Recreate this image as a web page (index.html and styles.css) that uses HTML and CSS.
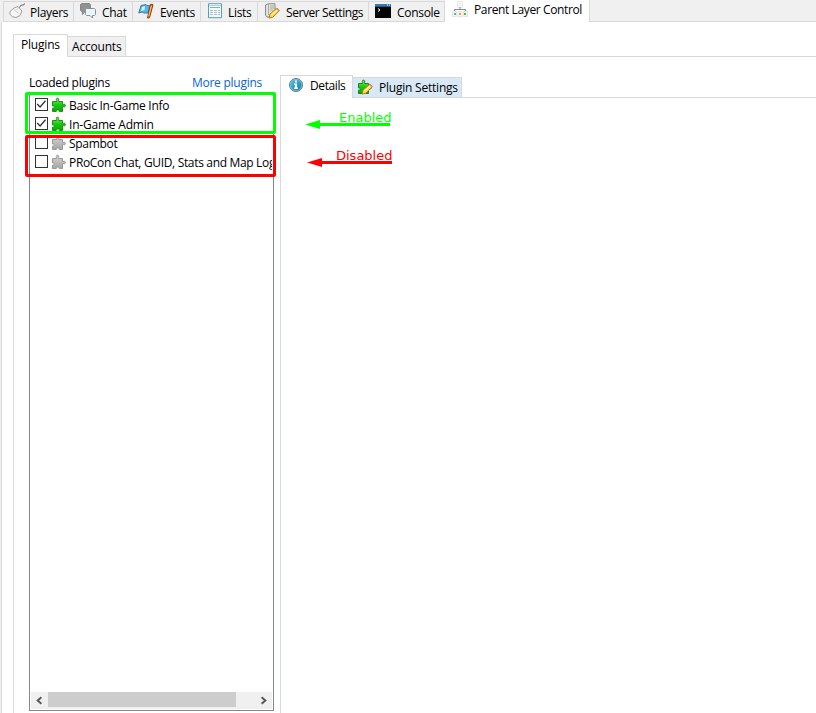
FILE: index.html
```html
<!DOCTYPE html>
<html lang="en">
<head>
<meta charset="utf-8">
<title>Parent Layer Control</title>
<link rel="stylesheet" href="styles.css">
</head>
<body>
<svg width="0" height="0" class="defs" aria-hidden="true">
  <defs>
    <linearGradient id="green" x2="0" y2="1"><stop stop-color="#8bea78"/><stop offset=".5" stop-color="#12cf08"/><stop offset="1" stop-color="#06a808"/></linearGradient>
    <linearGradient id="gray" x2="0" y2="1"><stop stop-color="#d5d5d5"/><stop offset="1" stop-color="#a5a5a5"/></linearGradient>
    <linearGradient id="blue" x2="1" y2="1"><stop stop-color="#58c8ec"/><stop offset="1" stop-color="#0878ad"/></linearGradient>
    <symbol id="puzzle" viewBox="0 0 16 16"><path d="M1.5 4.5H5.6V3.4C4 .4 8.8.4 7.6 3.4v1.1H11.5v3h1c2.6-1.500 2.600 3.500 0 2h-1v5H8.300c.2-2-3.300-2-3 0H1.500V11.200c2.400.3 2.400-2.700 0-2.200Z"/></symbol>
    <symbol id="pencil" viewBox="0 0 16 16"><path d="m5 15 1-4 7-6 2.3 2.5-6.500 6.800Z" fill="#ffd83c" stroke="#b67a18"/><path d="m7.300 12.300 6-5.300" stroke="#fff4a0" stroke-width="1.5"/><path d="m12.500 5.500 2.500 2.300" stroke="#ed8a80" stroke-width="1.5"/></symbol>
    <symbol id="tick" viewBox="0 0 11 11"><path d="m1.2 5 2.900 3 5.400-6.200" fill="none" stroke="#333" stroke-width="1.3"/></symbol>
  </defs>
</svg>
<nav class="strip">
  <div class="tab players"><svg class="icon" viewBox="0 0 16 16"><g fill="#f7f7f5" stroke="#8d8983"><path d="M5 5 9 3.5 13 8l-2 4.5-4 2-3.5-.7L.8 11 1 8.5Z" stroke-width=".8"/><path d="m4.5 6.2 5 4M7.5 7 10 4.3" fill="none" stroke="#c5c2bd" stroke-width=".8"/><path d="M10.5 4.5q1-3 3-2.5t2-1.5" fill="none" stroke="#64615e"/></g></svg><span>Players</span></div>
  <div class="tab chat"><svg class="icon" viewBox="0 0 16 16"><path d="M1.500.5h8l1 1v6l-1 1H5l-2.500 3v-3h-1l-1-1v-6Z" fill="#929292" stroke="#858585"/><path d="M6.500 5.500h8l1 1v5l-1 1h-2V15L10 12.500H6.500l-1-1v-5Z" fill="#edf5fb" stroke="#8192a0"/></svg><span>Chat</span></div>
  <div class="tab events"><svg class="icon" viewBox="0 0 16 16"><path d="m3 2.500 5-1 1 1.200h3L10 10H6L4 9 .8 10Z" fill="#54b8ef" stroke="#3478af"/><path d="m4 4 3-1-.5 4-3.500 1Z" fill="#d5f5ff"/><path d="m12.500 1.200 2.500.5-3.500 13-2 .3Z" fill="#e77924" stroke="#983b0c"/><path d="m13.300 3-2.500 10" stroke="#ffc36e"/></svg><span>Events</span></div>
  <div class="tab lists"><svg class="icon" viewBox="0 0 16 16"><path d="M1.500.7h13v14h-13Z" fill="#f5fbff" stroke="#5b99ca"/><path d="M2 2.500h12" stroke="#a7d4f3"/><path d="M3 4.500h10" stroke="#7dc45d"/><path d="M3 7.500h3m1 0h3m1 0h2M3 9.500h3m1 0h3m1 0h2M3 11.500h3m1 0h3m1 0h2" stroke="#a5bfd0"/></svg><span>Lists</span></div>
  <div class="tab server"><svg class="icon" viewBox="0 0 16 16"><path d="m1.500 2 3-1.300H11v10L8 14H3l-1.500-2Z" fill="#e6e4df" stroke="#8b8984"/><path d="M4.500 1v11M6 3h4M6 5h4M6 7h3" stroke="#aaa7a1"/><use href="#pencil"/></svg><span>Server Settings</span></div>
  <div class="tab console"><svg class="icon" viewBox="0 0 16 16"><path d="M0 1h16v14H0Z" fill="#050505"/><path d="M0 1h16v2.700H0Z" fill="#3479b8"/><path d="M12 2h1m1 0h1" stroke="#fff"/><path d="m3 5.500 2 1.500-2 1.500" fill="none" stroke="#fff"/></svg><span>Console</span></div>
  <div class="tab parent active"><svg class="icon" viewBox="0 0 16 16"><path d="M5.500.5h5v6h-5Z" fill="#fafafa" stroke="#e8e8e8"/><path d="M7 2h2M7 4h2" stroke="#e4e4e4"/><path d="M8 6v3M2.500 10.500v-2h11v2" fill="none" stroke="#888"/><g fill="#fafafa" stroke="#e3e3e3"><path d="M.5 10.500h4v5h-4ZM6 10.500h4v5H6ZM11.500 10.500h4v5h-4Z"/></g><path d="M2 13h2" stroke="#38b9ed" stroke-width="2"/><path d="M7 13h2" stroke="#ff9c24" stroke-width="2"/><path d="M12 13h2" stroke="#31ce35" stroke-width="2"/></svg><span>Parent Layer Control</span></div>
  <div class="rest"></div>
</nav>
<main class="page">
  <div class="inner-tabs"><div class="subtab plugins active">Plugins</div><div class="subtab accounts">Accounts</div></div>
  <div class="content">
    <section class="left">
      <header class="list-head"><span class="loaded">Loaded plugins</span><a class="more">More plugins</a></header>
      <div class="list">
        <div class="rows">
          <div class="row"><svg class="check"><use href="#tick"/></svg><svg class="piece enabled"><use href="#puzzle"/></svg><span class="r1">Basic In-Game Info</span></div>
          <div class="row"><svg class="check"><use href="#tick"/></svg><svg class="piece enabled"><use href="#puzzle"/></svg><span class="r2">In-Game Admin</span></div>
          <div class="row"><svg class="check"></svg><svg class="piece"><use href="#puzzle"/></svg><span class="r3">Spambot</span></div>
          <div class="row"><svg class="check"></svg><svg class="piece"><use href="#puzzle"/></svg><span class="r4">PRoCon Chat, GUID, Stats and Map Log</span></div>
        </div>
        <div class="scrollbar"><svg class="arrow" viewBox="0 0 18 17"><path d="m11 5-4 3.500 4 3.500"/></svg><div class="thumb"></div><div class="track"></div><svg class="arrow" viewBox="0 0 18 17"><path d="m7 5 4 3.500-4 3.500"/></svg></div>
      </div>
    </section>
    <section class="right">
      <div class="detail-tabs">
        <div class="subtab details active"><svg class="icon" viewBox="0 0 16 16"><circle cx="8" cy="8" r="6.500" fill="url(#blue)" stroke="#667b89"/><circle cx="8" cy="8" r="5.700" fill="none" stroke="#8bc8e0" stroke-width=".7"/><path d="M7 3.500h2v2H7Zm-1 3h3v4h1v1.500H6v-1.500h1V8H6Z" fill="#fff"/></svg><span>Details</span></div>
        <div class="subtab settings"><svg class="icon" viewBox="0 0 16 16"><use href="#puzzle" fill="url(#green)" stroke="#247d1d"/><use href="#pencil"/></svg><span>Plugin Settings</span></div>
      </div>
      <div class="detail-page"></div>
    </section>
  </div>
</main>
<div class="mark green"></div>
<div class="mark red"></div>
<div class="note enabled-note"><span>Enabled</span><svg width="86" height="9" viewBox="0 0 86 9"><path d="M0 4.500 15 0v9Z"/><path d="M13 3h72v3H13Z"/></svg></div>
<div class="note disabled-note"><span>Disabled</span><svg width="86" height="9" viewBox="0 0 86 9"><path d="M0 4.500 15 0v9Z"/><path d="M13 3h72v3H13Z"/></svg></div>
</body>
</html>
```
FILE: styles.css
```css
* { box-sizing: border-box; }
body { margin: 0; width: 816px; height: 713px; overflow: hidden; position: relative; background: #f0f0f0; color: #000; font: 12px/16px "Open Sans", "Noto Sans", sans-serif; letter-spacing: -.3px; white-space: nowrap; }
.defs { position: absolute; }
svg { display: block; flex: none; fill: none; }
.icon { width: 16px; height: 16px; }
.strip { height: 22px; padding-left: 3px; display: flex; }
.tab { height: 21px; margin-top: 1px; border: 1px solid #d9d9d9; border-left: 0; display: flex; align-items: flex-start; padding: 2px 0 0 5px; }
.tab span { margin-left: 6px; padding-top: 1px; }
.tab .icon { margin-top: -1px; }
.tab.players span { margin-left: 5px; }
.players { width: 71px; border-left: 1px solid #d9d9d9; letter-spacing: -.3px; }
.chat { width: 59px; padding-left: 6px; }
.events { width: 68px; }
.lists { width: 57px; padding-left: 6px; }
.tab.lists span { margin-left: 5px; }
.server { width: 111px; padding-left: 6px; letter-spacing: -.42px; }
.console { width: 76px; padding-left: 6px; }
.parent { width: 145px; height: 22px; margin-top: 0; background: #fff; border-top: 0; border-bottom: 0; padding: 1px 0 0 7px; letter-spacing: -.38px; }
.tab.parent .icon { margin-top: 0; }
.rest { flex: 1; border-bottom: 1px solid #d9d9d9; }
.page { width: 815px; height: 691px; margin-left: 1px; border-left: 1px solid #d9d9d9; background: #fff; padding: 12px 0 0 11px; }
.inner-tabs { height: 23px; display: flex; align-items: flex-end; border-bottom: 1px solid #d9d9d9; }
.subtab { border: 1px solid #d9d9d9; background: #f0f0f0; }
.subtab.active { background: #fff; border-bottom: 0; }
.plugins { width: 55px; height: 23px; margin-bottom: -1px; padding: 2px 0 0 7px; letter-spacing: -.2px; }
.accounts { width: 58px; height: 20px; border-left: 0; border-bottom: 0; padding: 2px 0 0 4px; letter-spacing: -.2px; }
.content { height: 656px; border-left: 1px solid #d9d9d9; display: flex; padding: 18px 0 0 15px; }
.left { width: 245px; height: 636px; display: flex; flex-direction: column; }
.list-head { height: 19px; display: flex; justify-content: space-between; padding: 0 12px 0 0; }
.more { color: #0866d6; letter-spacing: -.25px; }
.list { flex: 1; border: 1px solid #828790; display: flex; flex-direction: column; justify-content: space-between; padding: 1px; overflow: hidden; }
.rows { padding-left: 4px; }
.row { height: 19px; display: flex; align-items: center; overflow: hidden; }
.r1 { letter-spacing: -.26px; }
.r2 { letter-spacing: -.2px; }
.r4 { letter-spacing: -.33px; }
.check { width: 13px; height: 13px; border: 1px solid #333; margin-bottom: 2px; }
.piece { width: 16px; height: 16px; margin: 0 2px 2px 3px; fill: url(#gray); stroke: #999; }
.piece.enabled { fill: url(#green); stroke: #268b22; }
.scrollbar { height: 17px; display: flex; background: #f0f0f0; }
.arrow { width: 17px; height: 17px; stroke: #555; stroke-width: 2; }
.thumb { width: 188px; height: 15px; background: #cdcdcd; }
.track { flex: 1; }
.right { flex: 1; margin-left: 6px; display: flex; flex-direction: column; }
.detail-tabs { height: 23px; display: flex; align-items: flex-end; border-bottom: 1px solid #d9d9d9; }
.details, .settings { display: flex; }
.details { height: 23px; width: 73px; margin-bottom: -1px; padding: 2px 0 0 7px; }
.details .icon { margin-top: -1px; }
.details span { margin-left: 6px; letter-spacing: -.4px; }
.settings { width: 109px; height: 20px; background: #d8e8f7; border-left: 0; border-bottom: 0; padding: 2px 0 0 4px; letter-spacing: -.22px; }
.settings .icon { margin-top: -1px; }
.settings span { margin-left: 6px; }
.detail-page { flex: 1; border-left: 1px solid #d9d9d9; }
.mark { position: absolute; left: 25px; width: 251px; border: 3px solid; border-radius: 2px; }
.green { top: 92px; height: 42px; border-color: #0f0; }
.red { top: 135px; height: 42px; border-color: #f00; }
.note { position: absolute; left: 305px; font: 13px/16px "DejaVu Sans", sans-serif; letter-spacing: 0; }
.note span { display: block; }
.note svg { position: absolute; left: 0; top: 10px; fill: currentColor; }
.enabled-note { top: 110px; color: #0f0; padding-left: 34px; }
.disabled-note { top: 148px; left: 307px; color: #f00; padding-left: 29px; }
```
